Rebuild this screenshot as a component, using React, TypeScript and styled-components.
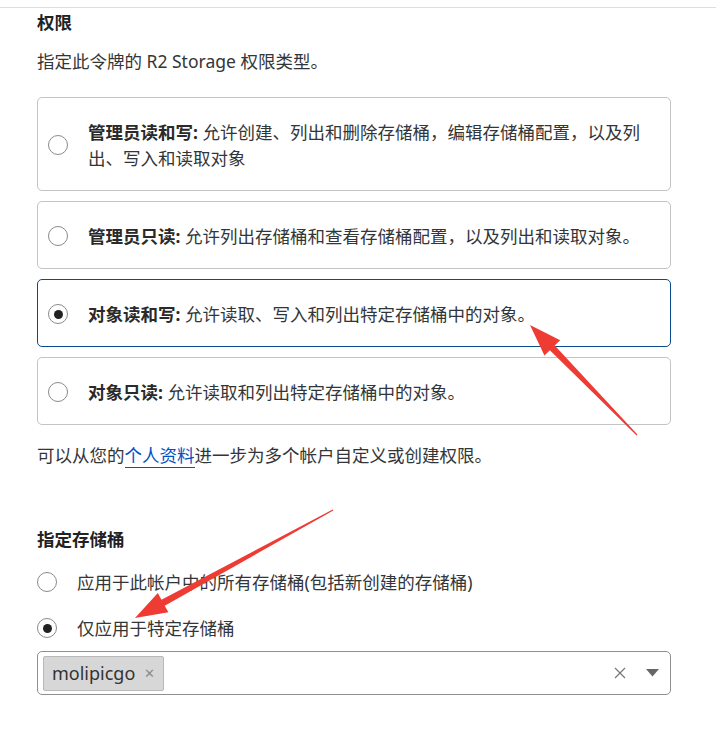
import React, { useState } from 'react';
import styled, { createGlobalStyle } from 'styled-components';

const GlobalStyle = createGlobalStyle`
	body {
		margin: 0;
		background: #ffffff;
		font-family: 'Noto Sans', 'Noto Sans CJK SC', sans-serif;
		color: #333638;
	}
`;

const Page = styled.div`
	position: relative;
	width: 716px;
	min-height: 731px;
	padding-top: 7px;
	box-sizing: border-box;
`;

const TopRule = styled.div`
	height: 1px;
	background: #dedede;
`;

const Content = styled.div`
	padding: 0 45px 0 37px;
	font-size: 17.5px;
	line-height: 26px;
`;

const Heading = styled.h3<{ $top: number }>`
	margin: ${(p) => p.$top}px 0 0;
	font-size: 17.5px;
	font-weight: 700;
	line-height: 26px;
	color: #222;
`;

const Lead = styled.p`
	margin: 13px 0 0;
`;

const CardList = styled.div`
	display: flex;
	flex-direction: column;
	gap: 10px;
	margin-top: 23px;
`;

const Card = styled.label<{ $active: boolean }>`
	display: flex;
	align-items: center;
	gap: 20px;
	padding: 21px 14px 19px 10px;
	border: 1px solid ${(p) => (p.$active ? '#0b4a8f' : '#c4c4c4')};
	border-radius: 5px;
	cursor: pointer;
`;

const Dot = styled.span<{ $on: boolean }>`
	flex: none;
	width: 20px;
	height: 20px;
	border-radius: 50%;
	border: 1px solid #8a8a8a;
	box-sizing: border-box;
	display: flex;
	align-items: center;
	justify-content: center;
	background: #fff;

	&::after {
		content: '';
		width: 9px;
		height: 9px;
		border-radius: 50%;
		background: #222;
		display: ${(p) => (p.$on ? 'block' : 'none')};
	}
`;

const CardText = styled.span`
	flex: 1;
	b {
		font-weight: 700;
		color: #2a2a2a;
	}
`;

const Note = styled.p`
	margin: 17px 0 0;
`;

const Link = styled.a`
	color: #0051c3;
	text-decoration: none;
	border-bottom: 1px solid #0051c3;
`;

const RadioList = styled.div`
	display: flex;
	flex-direction: column;
	gap: 20px;
	margin-top: 17px;
`;

const RadioRow = styled.label`
	display: flex;
	align-items: center;
	gap: 20px;
	cursor: pointer;
`;

const Select = styled.div`
	margin-top: 10px;
	height: 44px;
	box-sizing: border-box;
	border: 1px solid #8f8f8f;
	border-radius: 5px;
	display: flex;
	align-items: center;
	padding: 0 11px 0 5px;
`;

const Tag = styled.span`
	display: flex;
	align-items: center;
	gap: 9px;
	height: 35px;
	padding: 0 8px;
	box-sizing: border-box;
	background: #d7d7d7;
	border: 1px solid #b9b9b9;
	border-radius: 2px;
	font-size: 18px;
	color: #333;
`;

const TagClose = styled.span`
	font-size: 13px;
	color: #8c8c8c;
`;

const Spacer = styled.div`
	flex: 1;
`;

const Controls = styled.div`
	display: flex;
	align-items: center;
	gap: 20px;
`;

const Overlay = styled.svg`
	position: absolute;
	left: 0;
	top: 0;
	pointer-events: none;
`;

type Pt = [number, number];

const arrowPoints = (tail: Pt, tip: Pt) => {
	const dx = tip[0] - tail[0];
	const dy = tip[1] - tail[1];
	const len = Math.hypot(dx, dy);
	const u: Pt = [dx / len, dy / len];
	const n: Pt = [-u[1], u[0]];
	const headLen = 32;
	const base: Pt = [tip[0] - u[0] * headLen, tip[1] - u[1] * headLen];
	const at = (p: Pt, w: number): string => `${p[0] + n[0] * w},${p[1] + n[1] * w}`;
	return [at(tail, 0.6), at(base, 3.4), at(base, 11), `${tip[0]},${tip[1]}`, at(base, -11), at(base, -3.4), at(tail, -0.6)].join(' ');
};

const permissions = [
	{ id: 'admin-rw', label: '管理员读和写', text: '允许创建、列出和删除存储桶，编辑存储桶配置，以及列出、写入和读取对象' },
	{ id: 'admin-r', label: '管理员只读', text: '允许列出存储桶和查看存储桶配置，以及列出和读取对象。' },
	{ id: 'obj-rw', label: '对象读和写', text: '允许读取、写入和列出特定存储桶中的对象。' },
	{ id: 'obj-r', label: '对象只读', text: '允许读取和列出特定存储桶中的对象。' },
];

const App = () => {
	const [permission, setPermission] = useState('obj-rw');
	const [scope, setScope] = useState('specific');

	return (
		<Page>
			<GlobalStyle />
			<TopRule />
			<Content>
				<Heading $top={1}>权限</Heading>
				<Lead>指定此令牌的 R2 Storage 权限类型。</Lead>
				<CardList>
					{permissions.map((item) => (
						<Card key={item.id} $active={permission === item.id} onClick={() => setPermission(item.id)}>
							<Dot $on={permission === item.id} />
							<CardText>
								<b>{item.label}:</b> {item.text}
							</CardText>
						</Card>
					))}
				</CardList>
				<Note>
					可以从您的<Link href="#">个人资料</Link>进一步为多个帐户自定义或创建权限。
				</Note>
				<Heading $top={58}>指定存储桶</Heading>
				<RadioList>
					<RadioRow onClick={() => setScope('all')}>
						<Dot $on={scope === 'all'} />
						应用于此帐户中的所有存储桶(包括新创建的存储桶)
					</RadioRow>
					<RadioRow onClick={() => setScope('specific')}>
						<Dot $on={scope === 'specific'} />
						仅应用于特定存储桶
					</RadioRow>
				</RadioList>
				<Select>
					<Tag>
						molipicgo
						<TagClose>✕</TagClose>
					</Tag>
					<Spacer />
					<Controls>
						<svg width="12" height="12" viewBox="0 0 12 12">
							<path d="M1 1 L11 11 M11 1 L1 11" stroke="#777" strokeWidth="1.2" />
						</svg>
						<svg width="13" height="8" viewBox="0 0 13 8">
							<path d="M0 0 H13 L6.5 7.5 Z" fill="#666" />
						</svg>
					</Controls>
				</Select>
			</Content>
			<Overlay width="716" height="731" viewBox="0 0 716 731">
				<polygon points={arrowPoints([637, 435], [530, 325])} fill="#ee3b33" />
				<polygon points={arrowPoints([333, 510], [135, 618])} fill="#ee3b33" />
			</Overlay>
		</Page>
	);
};

export default App;
